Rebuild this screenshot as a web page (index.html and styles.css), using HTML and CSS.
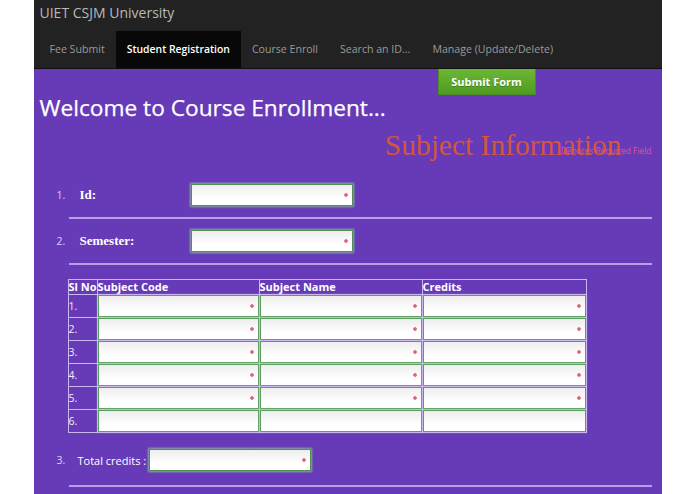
FILE: index.html
```html
<!DOCTYPE html>
<html lang="en">
<head>
<meta charset="utf-8">
<title>Course Enrollment</title>
<link rel="stylesheet" href="styles.css">
</head>
<body>
<div class="page">
  <header class="topbar"><span class="brand">UIET CSJM University</span></header>
  <nav class="nav">
    <a class="nav-item" href="#">Fee Submit</a>
    <a class="nav-item active" href="#">Student Registration</a>
    <a class="nav-item" href="#">Course Enroll</a>
    <a class="nav-item" href="#">Search an ID...</a>
    <a class="nav-item" href="#">Manage (Update/Delete)</a>
  </nav>
  <main class="content">
    <div class="actions"><button class="submit" type="button">Submit Form</button></div>
    <h1 class="welcome">Welcome to Course Enrollment...</h1>
    <div class="section-head">
      <h2 class="section-title">Subject Information</h2>
      <span class="note">Denotes Required Field</span>
    </div>

    <div class="form-row first">
      <span class="num">1.</span>
      <label class="label">Id:</label>
      <input class="field req" type="text">
    </div>
    <div class="rule"></div>
    <div class="form-row">
      <span class="num">2.</span>
      <label class="label">Semester:</label>
      <input class="field req" type="text">
    </div>
    <div class="rule"></div>

    <table class="subjects">
      <colgroup>
        <col class="c-no"><col class="c-code"><col class="c-name"><col class="c-cred">
      </colgroup>
      <thead>
        <tr><th>Sl No</th><th>Subject Code</th><th>Subject Name</th><th>Credits</th></tr>
      </thead>
      <tbody>
        <tr><td class="sl">1.</td><td><input class="cell req" type="text"></td><td><input class="cell req" type="text"></td><td><input class="cell req" type="text"></td></tr>
        <tr><td class="sl">2.</td><td><input class="cell req" type="text"></td><td><input class="cell req" type="text"></td><td><input class="cell req" type="text"></td></tr>
        <tr><td class="sl">3.</td><td><input class="cell req" type="text"></td><td><input class="cell req" type="text"></td><td><input class="cell req" type="text"></td></tr>
        <tr><td class="sl">4.</td><td><input class="cell req" type="text"></td><td><input class="cell req" type="text"></td><td><input class="cell req" type="text"></td></tr>
        <tr><td class="sl">5.</td><td><input class="cell req" type="text"></td><td><input class="cell req" type="text"></td><td><input class="cell req" type="text"></td></tr>
        <tr><td class="sl">6.</td><td><input class="cell" type="text"></td><td><input class="cell" type="text"></td><td><input class="cell" type="text"></td></tr>
      </tbody>
    </table>

    <div class="form-row total">
      <span class="num">3.</span>
      <label class="label-sans">Total credits :</label>
      <input class="field req" type="text">
    </div>
    <div class="rule"></div>
  </main>
</div>
</body>
</html>
```

FILE: styles.css
```css
html, body {
  margin: 0;
  padding: 0;
  background: #ffffff;
}

body {
  font-family: "Open Sans", "DejaVu Sans", sans-serif;
}

.page {
  width: 628px;
  margin: 0 auto;
}

.topbar {
  background: #222222;
  height: 31px;
  padding-left: 6px;
  box-sizing: border-box;
}

.brand {
  display: block;
  color: #b9b9b9;
  font-size: 14px;
  line-height: 26px;
}

.nav {
  display: flex;
  background: #222222;
  height: 38px;
  padding-left: 5px;
  box-sizing: border-box;
  border-bottom: 1px solid #111111;
}

.nav-item {
  display: block;
  padding: 0 11px;
  line-height: 37px;
  font-size: 10.6px;
  color: #9a9a9a;
  text-decoration: none;
}

.nav-item.active {
  background: #080808;
  color: #ffffff;
  font-weight: 600;
  font-size: 10.4px;
}

.content {
  background: #673ab7;
  padding-bottom: 20px;
}

.actions {
  display: flex;
  padding-left: 404px;
}

.submit {
  width: 98px;
  height: 26px;
  border: 1px solid #4c8a22;
  border-top: none;
  background: linear-gradient(#6cb734, #4f9b22);
  color: #ffffff;
  font-family: "Open Sans", "DejaVu Sans", sans-serif;
  font-weight: 700;
  font-size: 11px;
  padding: 0;
  text-shadow: 0 1px 0 rgba(0, 0, 0, 0.25);
}

.welcome {
  margin: 0;
  padding-left: 6px;
  font-size: 22.7px;
  line-height: 26px;
  font-weight: 400;
  color: #ffffff;
  -webkit-text-stroke: 0.25px #ffffff;
}

.section-head {
  position: relative;
  margin-top: 8px;
  height: 32px;
}

.section-title {
  margin: 0;
  text-align: right;
  padding-right: 40px;
  font-family: "Liberation Serif", "Times New Roman", serif;
  font-weight: 400;
  font-size: 29.5px;
  line-height: 32px;
  color: #d2573b;
}

.note {
  position: absolute;
  right: 10px;
  bottom: 5px;
  font-size: 8.4px;
  line-height: 10px;
  color: #e2557e;
}

.form-row {
  display: flex;
  align-items: center;
  padding: 11px 0 11px 23px;
}

.form-row.first {
  margin-top: 12px;
  padding-bottom: 11px;
}

.form-row.total {
  padding-top: 11px;
  padding-bottom: 14px;
}

.num {
  width: 23px;
  font-size: 10.5px;
  color: #dcd2f0;
}

.label {
  width: 111px;
  font-family: "Liberation Serif", "Times New Roman", serif;
  font-weight: 700;
  font-size: 13px;
  color: #ffffff;
}

.label-sans {
  margin-left: -2px;
  padding-right: 3px;
  font-size: 11px;
  color: #ffffff;
}

.field {
  width: 162px;
  height: 22px;
  box-sizing: border-box;
  margin: 0;
  border: 1px solid #4f8f55;
  box-shadow: 0 0 2px 1px rgba(150, 215, 150, 0.75);
  background: linear-gradient(#eeeeee, #ffffff 70%);
  padding: 0 4px;
  outline: none;
}

.req {
  background:
    radial-gradient(circle at calc(100% - 6px) 50%, #e0607a 0, #e0607a 1.4px, transparent 2.2px),
    linear-gradient(#eeeeee, #ffffff 70%);
}

.rule {
  height: 2px;
  margin: 0 10px 0 35px;
  background: #b89fe6;
}

.subjects {
  margin: 14px 0 5px 34px;
  border-collapse: collapse;
  table-layout: fixed;
  width: 518px;
  border: 1px solid #c9b8ec;
}

.c-no { width: 29px; }
.c-code { width: 162px; }
.c-name { width: 163px; }
.c-cred { width: 164px; }

.subjects th,
.subjects td {
  border: 1px solid #c9b8ec;
  padding: 0;
  text-align: left;
  color: #ffffff;
}

.subjects th {
  height: 14px;
  font-size: 11px;
  font-weight: 700;
  line-height: 14px;
  white-space: nowrap;
  overflow: visible;
}

.subjects td {
  height: 22px;
}

.subjects td.sl {
  font-size: 10.5px;
  color: #f2eefa;
}

.cell {
  display: block;
  width: 100%;
  height: 22px;
  box-sizing: border-box;
  margin: 0;
  border: 1px solid #5c9d62;
  box-shadow: 0 0 1px 1px rgba(150, 215, 150, 0.7);
  background: linear-gradient(#eeeeee, #ffffff 70%);
  padding: 0 4px;
  outline: none;
}

.cell.req {
  background:
    radial-gradient(circle at calc(100% - 6px) 50%, #e0607a 0, #e0607a 1.4px, transparent 2.2px),
    linear-gradient(#eeeeee, #ffffff 70%);
}
```
